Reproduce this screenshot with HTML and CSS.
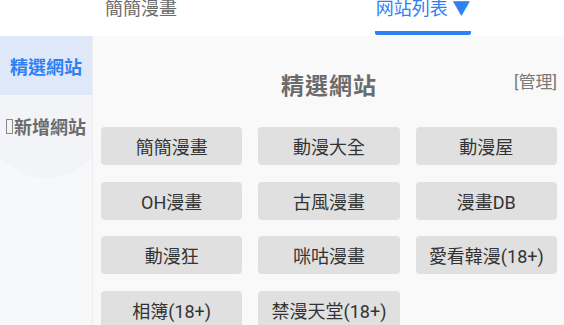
FILE: index.html
```html
<!DOCTYPE html>
<html>
<head>
<meta charset="utf-8">
<link rel="stylesheet" href="styles.css">
</head>
<body>
<div class="topbar">
  <div class="tab">簡簡漫畫</div>
  <div class="tab active"><span class="tab-label">网站列表 ▼</span></div>
</div>
<div class="body">
  <div class="sidebar">
    <div class="side-item selected">精選網站</div>
    <div class="side-item"><span class="tofu"></span>新增網站</div>
    <div class="ripple"></div>
  </div>
  <div class="main">
    <div class="head">
      <div class="title">精選網站</div>
      <div class="manage">[管理]</div>
    </div>
    <div class="grid">
      <div class="btn">簡簡漫畫</div>
      <div class="btn">動漫大全</div>
      <div class="btn">動漫屋</div>
      <div class="btn">OH漫畫</div>
      <div class="btn">古風漫畫</div>
      <div class="btn">漫畫DB</div>
      <div class="btn">動漫狂</div>
      <div class="btn">咪咕漫畫</div>
      <div class="btn">愛看韓漫(18+)</div>
      <div class="btn">相簿(18+)</div>
      <div class="btn">禁漫天堂(18+)</div>
    </div>
  </div>
</div>
</body>
</html>
```
FILE: styles.css
```css
html, body {
  margin: 0;
  padding: 0;
  width: 564px;
  height: 325px;
  overflow: hidden;
  background: #ffffff;
  font-family: "Roboto", "Noto Sans CJK TC", sans-serif;
}
.topbar {
  height: 36px;
  display: flex;
  background: #ffffff;
  overflow: hidden;
}
.tab {
  flex: 1;
  display: flex;
  justify-content: center;
  font-size: 18px;
  line-height: 18px;
  color: #6b6b6b;
}
.tab.active {
  color: #2f7ff5;
}
.tab-label {
  display: block;
  height: 35px;
  box-sizing: border-box;
  border-bottom: 4px solid #2f7ff5;
  border-radius: 0 0 2px 2px;
  padding: 0 1px;
}
.body {
  display: flex;
  height: 289px;
}
.sidebar {
  position: relative;
  width: 92px;
  flex: none;
  background: #f7f8fa;
  border-right: 1px solid #ececec;
  overflow: hidden;
}
.side-item {
  position: relative;
  z-index: 1;
  height: 59px;
  display: flex;
  align-items: center;
  justify-content: center;
  font-size: 18px;
  font-weight: bold;
  color: #6b6b6b;
}
.side-item.selected {
  background: #dfe8f8;
  color: #2f7ff5;
}
.side-item + .side-item {
  height: 62px;
}
.tofu {
  display: inline-block;
  width: 5px;
  height: 13px;
  border: 1px solid #8a8a8a;
  margin-right: 1px;
}
.ripple {
  position: absolute;
  left: -14px;
  top: 22px;
  width: 120px;
  height: 120px;
  border-radius: 50%;
  background: #f2f4f7;
}
.main {
  flex: 1;
  background: #f9f9f9;
  padding: 0 7px 0 8px;
}
.head {
  position: relative;
  height: 91px;
  display: flex;
  align-items: center;
  justify-content: center;
}
.title {
  font-size: 23px;
  font-weight: bold;
  color: #6b6b6b;
  margin-top: 4px;
  letter-spacing: 1px;
}
.manage {
  position: absolute;
  right: 0;
  top: 32px;
  font-size: 17px;
  color: #7a7a7a;
}
.grid {
  display: grid;
  grid-template-columns: repeat(3, 1fr);
  column-gap: 16px;
  row-gap: 16.5px;
}
.btn {
  height: 38px;
  background: #e0e0e0;
  border-radius: 4px;
  display: flex;
  align-items: center;
  justify-content: center;
  font-size: 18px;
  color: #333333;
}
```
